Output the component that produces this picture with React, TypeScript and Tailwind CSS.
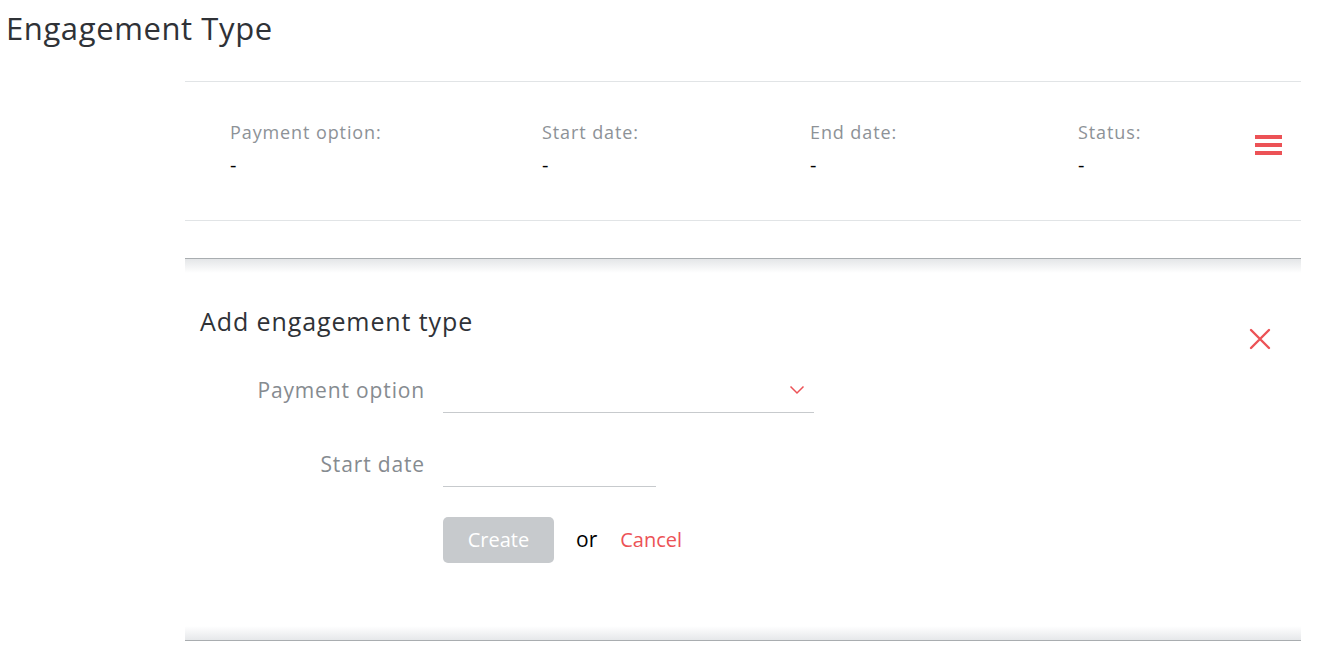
import React from "react";

export default function App() {
  const font = { fontFamily: "'Open Sans', Lato, sans-serif" };
  const label = "text-[18px] leading-[24px] text-[#8d9297] tracking-[0.9px]";
  const value = "text-[20px] leading-[24px] text-black mt-[9px]";
  return (
    <div className="min-h-[663px] w-[1321px] bg-white" style={font}>
      <h1 className="pl-[6px] pt-[9px] text-[31px] leading-[38px] font-normal text-[#2f3237] tracking-[0.6px]">
        Engagement Type
      </h1>
      <div className="ml-[185px] mr-[20px] mt-[34px]">
        <div className="border-t border-b border-[#e1e4e6] h-[140px] flex items-start pl-[45px] pt-[38px]">
          <div className="w-[312px]">
            <div className={label}>Payment option:</div>
            <div className={value}>-</div>
          </div>
          <div className="w-[268px]">
            <div className={label}>Start date:</div>
            <div className={value}>-</div>
          </div>
          <div className="w-[268px]">
            <div className={label}>End date:</div>
            <div className={value}>-</div>
          </div>
          <div className="flex-1">
            <div className={label}>Status:</div>
            <div className={value}>-</div>
          </div>
          <div className="mr-[19px] mt-[15px] flex flex-col gap-[4px]">
            <div className="w-[27px] h-[4px] bg-[#ec5256]" />
            <div className="w-[27px] h-[4px] bg-[#ec5256]" />
            <div className="w-[27px] h-[4px] bg-[#ec5256]" />
          </div>
        </div>
        <div className="mt-[37px] h-[383px] border-t border-b border-[#a9adb0] bg-[linear-gradient(to_bottom,#e4e6e8_0px,#ffffff_14px,#ffffff_calc(100%-14px),#e6e8ea_100%)]">
          <div className="flex justify-between items-start pl-[15px] pr-[20px] pt-[47px]">
            <div className="text-[25px] leading-[30px] text-[#2f3237] tracking-[0.9px]">Add engagement type</div>
            <svg width="22" height="22" viewBox="0 0 22 22" className="mt-[22px] mr-[10px]">
              <path d="M2 2 L20 20 M20 2 L2 20" stroke="#ec5256" strokeWidth="2.4" strokeLinecap="round" />
            </svg>
          </div>
          <div className="mt-[21px] flex items-end">
            <div className="w-[240px] text-right text-[21px] leading-[28px] text-[#868b90] pb-[9px] tracking-[0.85px]">Payment option</div>
            <div className="ml-[18px] w-[371px] h-[42px] border-b border-[#c7cacd] flex items-center justify-end pr-[9px]">
              <svg width="16" height="10" viewBox="0 0 16 10" className="mb-[4px]">
                <path d="M1.5 1.5 L8 8 L14.5 1.5" stroke="#ec5256" strokeWidth="1.5" fill="none" />
              </svg>
            </div>
          </div>
          <div className="mt-[32px] flex items-end">
            <div className="w-[240px] text-right text-[21px] leading-[28px] text-[#868b90] pb-[9px] tracking-[0.85px]">Start date</div>
            <div className="ml-[18px] w-[213px] h-[42px] border-b border-[#c7cacd]" />
          </div>
          <div className="mt-[30px] ml-[258px] flex items-center">
            <button className="w-[111px] h-[46px] rounded-[5px] bg-[#c7cacd] text-white text-[20px] font-medium">Create</button>
            <span className="ml-[22px] text-[21px] text-black">or</span>
            <span className="ml-[23px] text-[20px] text-[#ec5256] font-medium">Cancel</span>
          </div>
        </div>
      </div>
    </div>
  );
}
